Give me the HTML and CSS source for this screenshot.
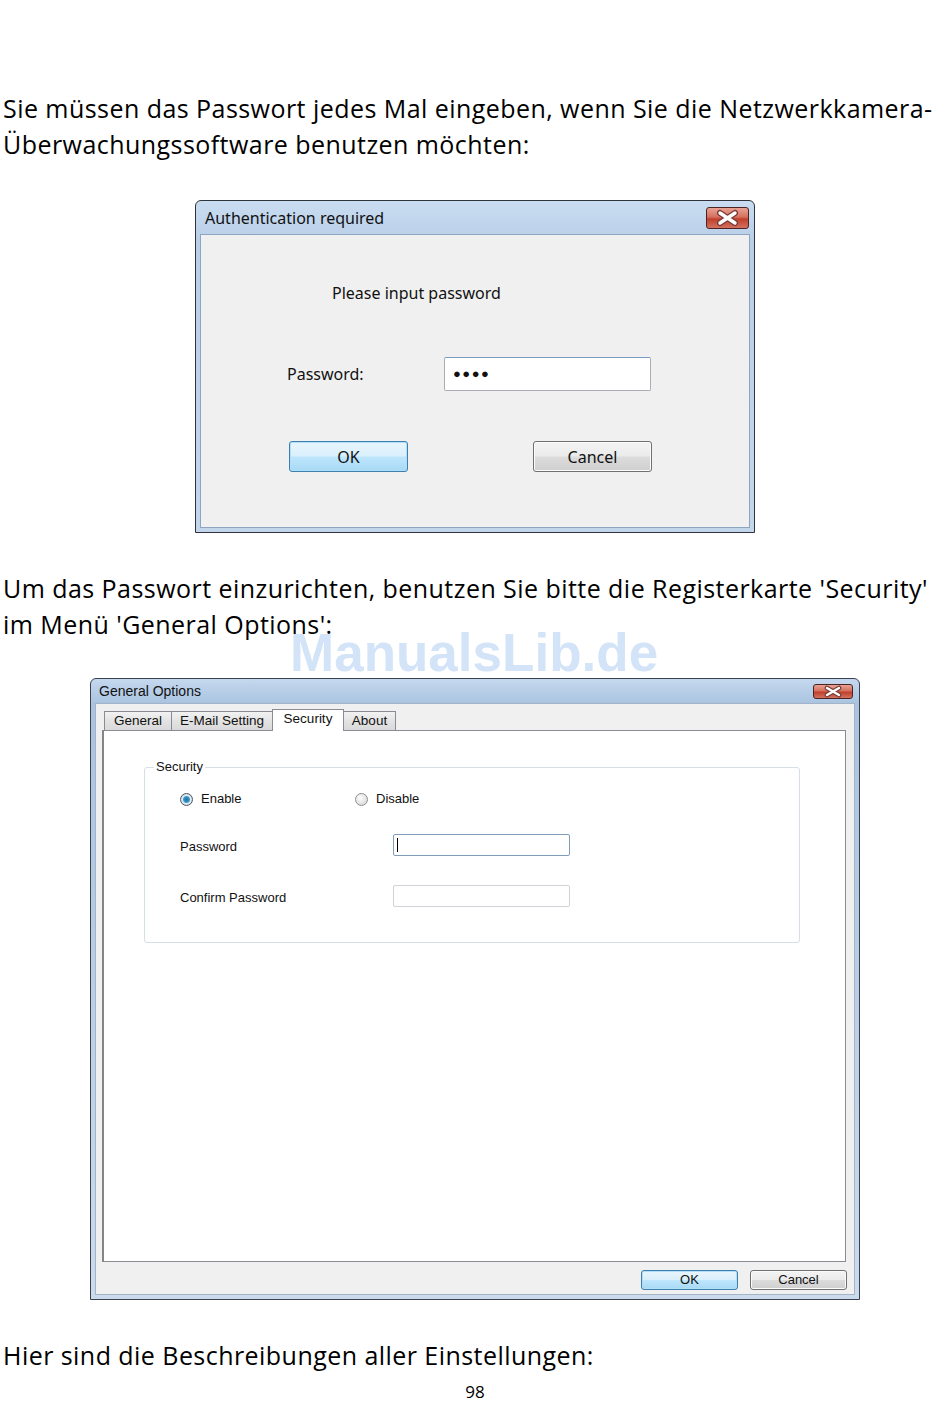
FILE: index.html
```html
<!DOCTYPE html>
<html lang="de">
<head>
  <meta charset="UTF-8" />
  <meta name="viewport" content="width=device-width, initial-scale=1.0" />
  <title>Passwort – Handbuch Seite 98</title>
  <link rel="stylesheet" href="styles.css">
</head>
<body>
  <p class="text">Sie müssen das Passwort jedes Mal eingeben, wenn Sie die Netzwerkkamera-<br>Überwachungssoftware benutzen möchten:</p>

  <!-- Dialog: Authentifizierung -->
  <div class="auth">
    <div class="auth-title">
      <span>Authentication required</span>
      <span class="close close-big">
        <svg width="43" height="22" viewBox="0 0 43 22">
          <path d="M14 6 L29 16 M29 6 L14 16" stroke="#7a3b36" stroke-width="6" stroke-linecap="round" />
          <path d="M14 6 L29 16 M29 6 L14 16" stroke="#fff" stroke-width="3.4" stroke-linecap="round" />
        </svg>
      </span>
    </div>
    <div class="auth-body">
      <div class="prompt">Please input password</div>
      <div class="auth-field">
        <span class="auth-label">Password:</span>
        <div class="auth-input">●●●●</div>
      </div>
      <div class="auth-buttons">
        <div class="btn btn-default">OK</div>
        <div class="btn">Cancel</div>
      </div>
    </div>
  </div>

  <p class="text gap">Um das Passwort einzurichten, benutzen Sie bitte die Registerkarte 'Security'<br>im Menü 'General Options':</p>

  <div class="watermark">ManualsLib.de</div>

  <!-- Dialog: General Options -->
  <div class="options">
    <div class="opt-title">
      <span>General Options</span>
      <span class="close close-small">
        <svg width="40" height="15" viewBox="0 0 40 15">
          <path d="M14 4 L26 11 M26 4 L14 11" stroke="#7a3b36" stroke-width="4.6" stroke-linecap="round" />
          <path d="M14 4 L26 11 M26 4 L14 11" stroke="#fff" stroke-width="2.4" stroke-linecap="round" />
        </svg>
      </span>
    </div>
    <div class="opt-body">
      <div class="tabs">
        <div class="tab w-general">General</div>
        <div class="tab w-mail">E-Mail Setting</div>
        <div class="tab tab-active w-security">Security</div>
        <div class="tab w-about">About</div>
      </div>
      <div class="panel">
        <fieldset class="group">
          <legend>Security</legend>
          <div class="radio-row">
            <span class="radio-item"><span class="radio radio-on"></span>Enable</span>
            <span class="radio-item"><span class="radio"></span>Disable</span>
          </div>
          <div class="opt-field first">
            <span class="opt-label">Password</span>
            <div class="opt-input focused"><span class="caret"></span></div>
          </div>
          <div class="opt-field">
            <span class="opt-label">Confirm Password</span>
            <div class="opt-input"></div>
          </div>
        </fieldset>
      </div>
      <div class="opt-buttons">
        <div class="btn btn-small btn-default">OK</div>
        <div class="btn btn-small">Cancel</div>
      </div>
    </div>
  </div>

  <p class="text gap">Hier sind die Beschreibungen aller Einstellungen:</p>
  <div class="page-num">98</div>
</body>
</html>
```

FILE: styles.css
```css
body {
  margin: 0;
  padding: 90px 3px 0;
  font-family: "Open Sans", Lato, sans-serif;
  font-size: 25px;
  line-height: 36px;
  color: #000;
  background: #fff;
  position: relative;
}
.text {
  margin: 0;
  position: relative;
  z-index: 1;
  white-space: nowrap;
  letter-spacing: 0.45px;
}
.text.gap {
  margin-top: 37px;
}
.page-num {
  margin-top: 9px;
  font-size: 17px;
  line-height: 20px;
  text-align: center;
}

/* Wasserzeichen über dem Text */
.watermark {
  position: absolute;
  left: 290px;
  top: 626px;
  font-family: "Liberation Sans", Arial, sans-serif;
  font-weight: bold;
  font-size: 53px;
  line-height: 53px;
  color: #d3e4f8;
  pointer-events: none;
}

/* gemeinsame Teile */
.close {
  display: flex;
  border: 1px solid #4b2320;
  border-radius: 3px;
  background: linear-gradient(#e9a294, #d5705e 45%, #c0402c 55%, #d4715f);
  box-sizing: border-box;
  overflow: hidden;
}
.close svg {
  display: block;
  flex: none;
  margin: -1px;
}
.close-big {
  width: 43px;
  height: 22px;
}
.close-small {
  width: 40px;
  height: 15px;
}
.btn {
  width: 119px;
  height: 31px;
  box-sizing: border-box;
  border: 1px solid #707070;
  border-radius: 3px;
  background: linear-gradient(#f3f3f3, #ebebeb 48%, #dcdcdc 52%, #cfcfcf);
  display: flex;
  align-items: center;
  justify-content: center;
  box-shadow: inset 0 0 0 1px #fbfbfb;
}
.btn-default {
  border-color: #3c7fb1;
  background: linear-gradient(#e8f5fc, #d9f0fc 48%, #bee6fd 52%, #a7d9f5);
  box-shadow: inset 0 0 0 1px #b2dff5;
}

/* Authentication required */
.auth {
  width: 560px;
  height: 333px;
  margin: 38px auto 0;
  box-sizing: border-box;
  border: 1px solid #2f333a;
  border-radius: 6px 6px 0 0;
  background: linear-gradient(#c9dcf1, #b9cfe8 40px, #c3d6ec);
  padding: 0 4px 4px;
  display: flex;
  flex-direction: column;
  font-family: "Noto Sans", sans-serif;
  font-size: 16px;
  line-height: 24px;
  color: #111;
}
.auth-title {
  height: 33px;
  flex: none;
  display: flex;
  align-items: center;
  justify-content: space-between;
  padding: 0 1px 0 5px;
  font-size: 16px;
}
.auth-body {
  flex: 1;
  background: #f0f0f0;
  border: 1px solid #8ea5c1;
}
.prompt {
  margin: 46px 0 0 131px;
}
.auth-field {
  display: flex;
  align-items: center;
  margin-top: 52px;
}
.auth-label {
  margin-left: 86px;
  width: 157px;
}
.auth-input {
  width: 207px;
  height: 34px;
  box-sizing: border-box;
  background: #fff;
  border: 1px solid #abadb3;
  border-top-color: #7a9bc2;
  border-radius: 2px;
  padding-left: 8px;
  font-size: 13px;
  line-height: 30px;
  letter-spacing: 1.5px;
}
.auth-buttons {
  display: flex;
  gap: 125px;
  margin: 50px 0 0 88px;
}

/* General Options */
.options {
  width: 770px;
  height: 622px;
  margin: 36px auto 0;
  box-sizing: border-box;
  border: 1px solid #3a4250;
  border-radius: 6px 6px 0 0;
  background: linear-gradient(#c5d8ee, #a9c3e0 25px, #cbdbec);
  padding: 0 4px 4px;
  display: flex;
  flex-direction: column;
  font-family: "Liberation Sans", Arial, sans-serif;
  font-size: 14px;
  line-height: 16px;
  color: #111;
}
.opt-title {
  height: 24px;
  flex: none;
  display: flex;
  align-items: center;
  justify-content: space-between;
  padding: 0 2px 0 4px;
}
.opt-body {
  flex: 1;
  background: #f0f0f0;
  border: 1px solid #a3b4c8;
  padding: 5px 7px 0 6px;
}
.tabs {
  display: flex;
  align-items: flex-end;
  height: 21px;
  padding-left: 2px;
  font-size: 13.5px;
}
.tab {
  height: 19px;
  box-sizing: border-box;
  border: 1px solid #898c95;
  border-bottom: none;
  background: linear-gradient(#f2f2f2, #e3e3e3 50%, #d9d9d9);
  text-align: center;
  line-height: 18px;
  margin-right: -1px;
}
.tab-active {
  height: 22px;
  background: #fff;
  margin-bottom: -1px;
  position: relative;
  line-height: 18px;
}
.w-general { width: 68px; }
.w-mail { width: 102px; }
.w-security { width: 72px; }
.w-about { width: 53px; }
.panel {
  width: 744px;
  height: 532px;
  box-sizing: border-box;
  background: #fff;
  border: 1px solid #898c95;
  border-left: 2px solid #858585;
  padding: 28px 0 0 40px;
}
.group {
  margin: 0;
  width: 656px;
  height: 184px;
  box-sizing: border-box;
  border: 1px solid #d5dfe5;
  border-radius: 3px;
  padding: 15px 0 0 35px;
}
.group legend {
  padding: 0 2px;
  margin-left: -26px;
  font-size: 13px;
}
.radio-row {
  display: flex;
  height: 16px;
  align-items: center;
  font-size: 13px;
  margin-top: 1px;
}
.radio-item {
  display: flex;
  align-items: center;
  gap: 8px;
  width: 175px;
}
.radio {
  width: 13px;
  height: 13px;
  box-sizing: border-box;
  border-radius: 50%;
  border: 1px solid #8e8f8f;
  background: radial-gradient(circle at 40% 35%, #fdfdfd, #d2d2d2);
}
.radio-on {
  border-color: #4e5a66;
  background: radial-gradient(circle, #1d6f9e 0, #3a9bd1 3px, #e8eef2 4px, #c9d3da 6px);
}
.opt-field {
  display: flex;
  align-items: center;
  margin-top: 29px;
  font-size: 13px;
}
.opt-field.first {
  margin-top: 27px;
}
.opt-label {
  width: 213px;
  padding-top: 3px;
}
.opt-input {
  width: 177px;
  height: 22px;
  box-sizing: border-box;
  background: #fff;
  border: 1px solid #d0d3d8;
  border-radius: 2px;
  display: flex;
  align-items: center;
}
.opt-input.focused {
  border-color: #7f9db9;
}
.caret {
  width: 1px;
  height: 14px;
  margin-left: 3px;
  background: #000;
}
.opt-buttons {
  display: flex;
  justify-content: flex-end;
  gap: 12px;
  margin-top: 8px;
  padding-right: 0;
}
.btn-small {
  width: 97px;
  height: 20px;
  font-size: 13px;
}
```
